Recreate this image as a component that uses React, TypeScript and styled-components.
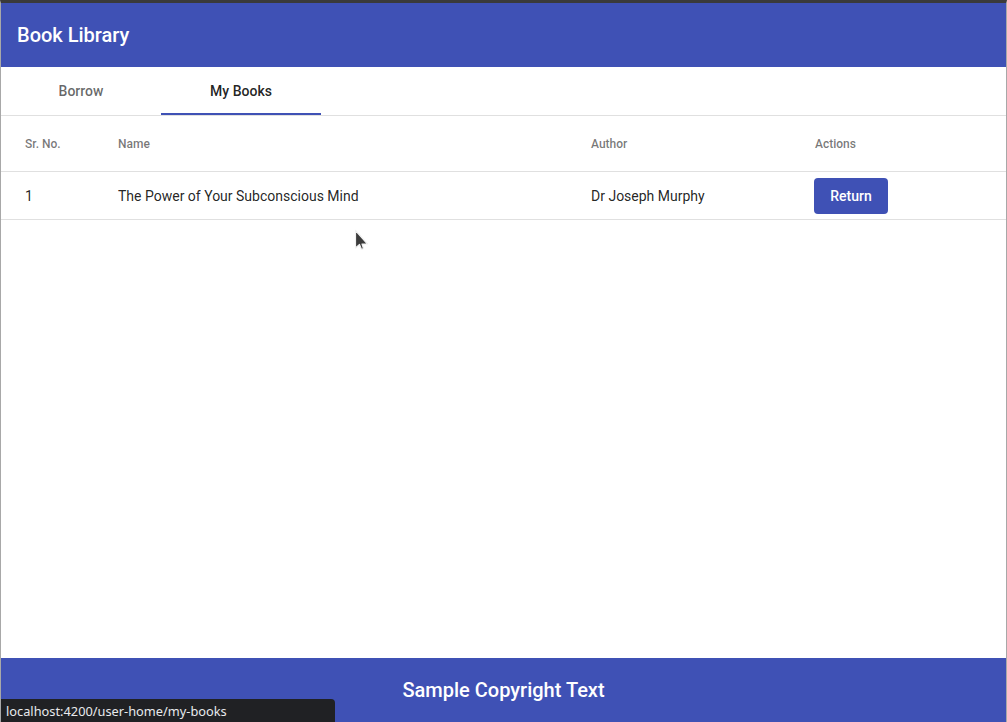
import React from "react";
import styled, { createGlobalStyle } from "styled-components";

const Global = createGlobalStyle`
  html, body { margin: 0; padding: 0; }
  body {
    font-family: Roboto, "Helvetica Neue", sans-serif;
    background: #fff;
  }
  * { box-sizing: border-box; }
`;

const Frame = styled.div`
  position: relative;
  height: 722px;
  display: flex;
  flex-direction: column;
  border-top: 3px solid #3a3a3a;
  border-left: 1px solid #a8a8a8;
  border-right: 1px solid #a8a8a8;
  overflow: hidden;
`;

const Toolbar = styled.header`
  height: 64px;
  flex: none;
  background: #3f51b5;
  color: #fff;
  display: flex;
  align-items: center;
  padding: 0 16px;
  font-size: 20px;
  font-weight: 500;
`;

const TabBar = styled.nav`
  display: flex;
  height: 49px;
  flex: none;
  border-bottom: 1px solid #e0e0e0;
`;

const Tab = styled.div<{ $active?: boolean }>`
  width: 160px;
  display: flex;
  align-items: center;
  justify-content: center;
  padding-top: 2px;
  font-size: 14px;
  font-weight: 500;
  color: ${(p) => (p.$active ? "rgba(0,0,0,0.87)" : "rgba(0,0,0,0.6)")};
  border-bottom: 2px solid ${(p) => (p.$active ? "#3f51b5" : "transparent")};
`;

const Table = styled.div`
  display: grid;
  grid-template-columns: 117px 473px 224px 1fr;
  flex: none;
`;

const HeadCell = styled.div<{ $first?: boolean }>`
  height: 56px;
  display: flex;
  align-items: center;
  padding-left: ${(p) => (p.$first ? "24px" : "0")};
  font-size: 12px;
  font-weight: 500;
  color: rgba(0,0,0,0.54);
  border-bottom: 1px solid #e0e0e0;
`;

const Cell = styled.div<{ $first?: boolean }>`
  height: 48px;
  display: flex;
  align-items: center;
  padding-left: ${(p) => (p.$first ? "24px" : "0")};
  font-size: 14px;
  color: rgba(0,0,0,0.87);
  border-bottom: 1px solid #e0e0e0;
`;

const ReturnButton = styled.button`
  height: 36px;
  width: 74px;
  border: none;
  border-radius: 4px;
  background: #3f51b5;
  color: #fff;
  font-family: Roboto, sans-serif;
  font-size: 14px;
  font-weight: 500;
  margin-left: -1px;
  padding: 0;
`;

const Spacer = styled.div`
  flex: 1;
`;

const Footer = styled.footer`
  height: 64px;
  flex: none;
  background: #3f51b5;
  color: #fff;
  display: flex;
  align-items: center;
  justify-content: center;
  font-size: 20px;
  font-weight: 500;
`;

const StatusBubble = styled.div`
  position: absolute;
  left: -1px;
  bottom: 0;
  width: 335px;
  height: 23px;
  background: #202124;
  color: #e8eaed;
  border-top-right-radius: 4px;
  font-family: "Noto Sans", sans-serif;
  font-size: 12.8px;
  display: flex;
  align-items: center;
  padding-left: 6px;
`;

const Cursor = styled.svg`
  position: absolute;
  left: 352px;
  top: 224px;
`;

export default function App() {
  return (
    <>
      <Global />
      <Frame>
        <Toolbar>Book Library</Toolbar>
        <TabBar>
          <Tab>Borrow</Tab>
          <Tab $active>My Books</Tab>
        </TabBar>
        <Table>
          <HeadCell $first>Sr. No.</HeadCell>
          <HeadCell>Name</HeadCell>
          <HeadCell>Author</HeadCell>
          <HeadCell>Actions</HeadCell>
          <Cell $first>1</Cell>
          <Cell>The Power of Your Subconscious Mind</Cell>
          <Cell>Dr Joseph Murphy</Cell>
          <Cell>
            <ReturnButton>Return</ReturnButton>
          </Cell>
        </Table>
        <Spacer />
        <Footer>Sample Copyright Text</Footer>
        <Cursor width="18" height="26" viewBox="0 0 18 26">
          <path d="M2.5 3.5 L2.5 21 L6.5 17.5 L8.5 22.5 L10.5 21.5 L9 17 L14.5 17 Z" fill="#3c3c3c" stroke="#f2f2f2" strokeWidth="1.2" strokeLinejoin="round" />
        </Cursor>
        <StatusBubble>localhost:4200/user-home/my-books</StatusBubble>
      </Frame>
    </>
  );
}
